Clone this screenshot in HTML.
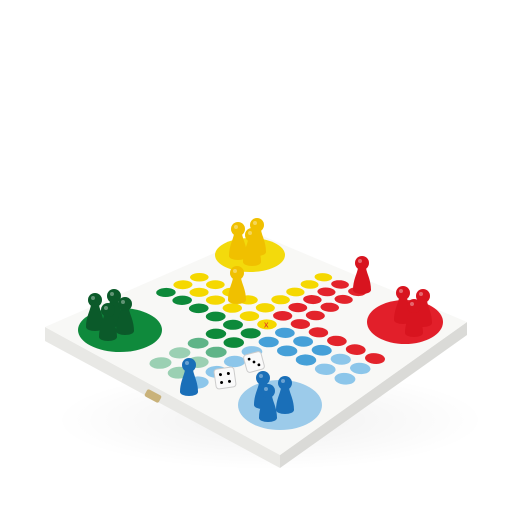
<!DOCTYPE html><html><head><style>html,body{margin:0;padding:0;background:#fff;width:512px;height:512px;overflow:hidden}</style></head><body>
<svg id="s" width="512" height="512" viewBox="0 0 512 512" xmlns="http://www.w3.org/2000/svg">
<defs>
<radialGradient id="sh" cx="0.5" cy="0.5" r="0.5"><stop offset="0" stop-color="#000" stop-opacity="0.06"/><stop offset="1" stop-color="#000" stop-opacity="0"/></radialGradient>
</defs>
<ellipse cx="270" cy="420" rx="215" ry="50" fill="url(#sh)"/>
<polygon points="45,327 280,455 280,468 45,341" fill="#e8e8e5"/>
<polygon points="280,455 467,322 467,335 280,468" fill="#dadad7"/>
<polygon points="45,327 258,234 467,322 280,455" fill="#f8f8f6"/>
<ellipse cx="120" cy="330" rx="42" ry="22" fill="#0f8a3c"/>
<ellipse cx="250" cy="255" rx="35" ry="17" fill="#f3da0c"/>
<ellipse cx="405" cy="322" rx="38" ry="22" fill="#e21f2a"/>
<ellipse cx="280" cy="405" rx="42" ry="25" fill="#9ccbea"/>
<g id="b"></g>
<rect x="145" y="392" width="16" height="8" rx="2" fill="#c9b27a" transform="rotate(28 153 396)"/>
<g id="p"></g>
</svg>
<script>
var X=[45,258,467,280],Y=[327,234,322,455];
var dx1=X[1]-X[2],dx2=X[3]-X[2],dx3=X[0]-X[1]+X[2]-X[3],dy1=Y[1]-Y[2],dy2=Y[3]-Y[2],dy3=Y[0]-Y[1]+Y[2]-Y[3];
var den=dx1*dy2-dx2*dy1,g=(dx3*dy2-dx2*dy3)/den,h=(dx1*dy3-dx3*dy1)/den;
var a=X[1]-X[0]+g*X[1],b=X[3]-X[0]+h*X[3],c=X[0],d=Y[1]-Y[0]+g*Y[1],e=Y[3]-Y[0]+h*Y[3],f=Y[0];
function M(u,v){var w=g*u+h*v+1;return[(a*u+b*v+c)/w,(d*u+e*v+f)/w];}
function circ(cu,cv,r,fill){var p=[];for(var k=0;k<24;k++){var t=k/24*2*Math.PI;var q=M(cu+r*Math.cos(t),cv+r*Math.sin(t));p.push(q[0].toFixed(1)+','+q[1].toFixed(1));}return '<polygon points="'+p.join(' ')+'" fill="'+fill+'"/>';}
var s='';
function T(k){return 0.06+(k+0.5)*0.88/11;}
var Yc='#f5d800',Rc='#e3232b',Bc='#45a0d8',Gc='#0d8a3a';
for(var i=0;i<11;i++)for(var j=0;j<11;j++){
 var inI=i>=4&&i<=6,inJ=j>=4&&j<=6;if(!(inI||inJ))continue;var col;
 if(inI&&inJ){ if(i==5&&j==5)col=Yc;
   else if(j==4&&i>=5)col=Yc;else if(i==6&&j>=5)col=Rc;else if(j==6&&i<=5)col=Bc;else col=Gc;}
 else if(j<4){col=(i>=5)?Yc:Gc;}
 else if(i>6){col=(j==4)?Yc:Rc;}
 else if(j>6){col=(i==6)?Rc:(j>8?'#8cc6ea':Bc);}
 else {col=(j==6)?'#8cc6ea':(i<2?'#9bd0b3':(i<3?'#5fb488':Gc));}
 s+=circ(T(i),T(j),0.033,col);
}
var cc=M(T(5),T(5));s+='<text x="'+(cc[0]-3)+'" y="'+(cc[1]+3)+'" font-size="9" fill="#e3232b" font-family="Liberation Sans, sans-serif">x</text>';
document.getElementById('b').innerHTML=s;
var P=[['#f0c000',238,256],['#f0c000',257,252],['#f0c000',252,262],['#f0c000',237,300],['#d8141f',362,290],
['#d8141f',403,320],['#d8141f',423,323],['#d8141f',414,333],['#0b5a2a',95,327],['#0b5a2a',114,323],['#0b5a2a',125,331],['#0b5a2a',108,337],
['#1a6fb8',189,392],['#1a6fb8',263,405],['#1a6fb8',285,410],['#1a6fb8',268,418]];
P.sort(function(x,y){return x[2]-y[2]});
var q='';
q+='<g transform="translate(225,378) rotate(-8)"><rect x="-10" y="-10" width="20" height="20" rx="3" fill="#fafafa" stroke="#ccc"/><circle cx="-4" cy="-4" r="1.5"/><circle cx="4" cy="4" r="1.5"/><circle cx="4" cy="-4" r="1.5"/><circle cx="-4" cy="4" r="1.5"/></g>';
q+='<g transform="translate(254,362) rotate(-15)"><rect x="-9" y="-9" width="18" height="18" rx="3" fill="#fafafa" stroke="#ccc"/><circle cx="-4" cy="-4" r="1.4"/><circle cx="4" cy="4" r="1.4"/><circle cx="0" cy="0" r="1.4"/></g>';
P.forEach(function(p){var x=p[1],y=p[2],cl=p[0];
q+='<ellipse cx="'+x+'" cy="'+y+'" rx="9" ry="4" fill="'+cl+'"/>';
q+='<path d="M'+(x-9)+' '+y+' C'+(x-9)+' '+(y-10)+' '+(x-5)+' '+(y-16)+' '+(x-4)+' '+(y-22)+' L'+(x+4)+' '+(y-22)+' C'+(x+5)+' '+(y-16)+' '+(x+9)+' '+(y-10)+' '+(x+9)+' '+y+' Z" fill="'+cl+'"/>';
q+='<circle cx="'+x+'" cy="'+(y-27)+'" r="7" fill="'+cl+'"/>';
q+='<circle cx="'+(x-2)+'" cy="'+(y-29)+'" r="2" fill="#fff" opacity="0.35"/>';});
document.getElementById('p').innerHTML=q;
</script>
</body></html>
